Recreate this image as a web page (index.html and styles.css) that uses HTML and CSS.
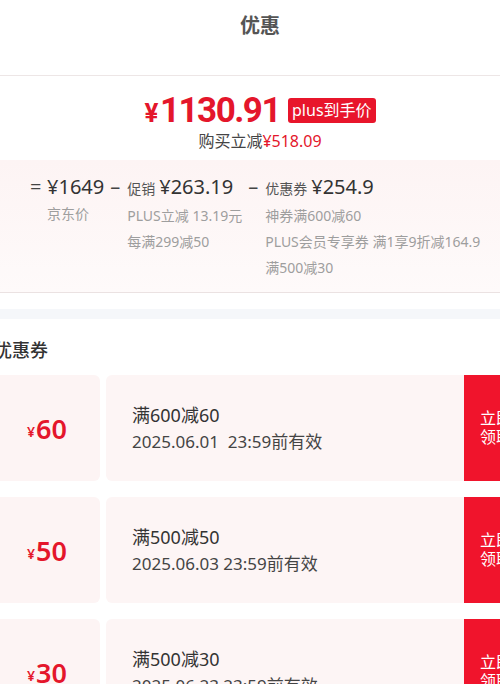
FILE: index.html
```html
<!DOCTYPE html>
<html lang="zh-CN">
<head>
    <meta charset="UTF-8">
    <meta name="viewport" content="width=device-width, initial-scale=1.0">
    <title>优惠</title>
    <link rel="stylesheet" href="styles.css">
</head>
<body>
<div class="page">
    <div class="header">
        <h1>优惠</h1>
    </div>

    <div class="price-box">
        <div class="price-line">
            <span class="price"><span class="yen">¥</span>1130.91</span>
            <span class="badge">plus到手价</span>
        </div>
        <div class="save">购买立减<span class="red">¥518.09</span></div>
    </div>

    <div class="detail">
        <div class="group">
            <span class="sign">=</span>
            <div class="stack">
                <div class="amount">¥1649</div>
                <div class="note">京东价</div>
            </div>
        </div>
        <div class="group">
            <span class="sign">–</span>
            <div class="stack">
                <div class="amount"><small>促销</small>¥263.19</div>
                <div class="note">PLUS立减 13.19元</div>
                <div class="note">每满299减50</div>
            </div>
        </div>
        <div class="group">
            <span class="sign">–</span>
            <div class="stack">
                <div class="amount"><small>优惠券</small>¥254.9</div>
                <div class="note">神券满600减60</div>
                <div class="note">PLUS会员专享券 满1享9折减164.9</div>
                <div class="note">满500减30</div>
            </div>
        </div>
    </div>

    <div class="band"></div>

    <div class="coupons">
        <h2>优惠券</h2>

        <div class="coupon">
            <div class="value"><span class="yen">¥</span>60</div>
            <div class="info">
                <div class="title">满600减60</div>
                <div class="date">2025.06.01&nbsp; 23:59前有效</div>
            </div>
            <div class="get">立即<br>领取</div>
        </div>

        <div class="coupon">
            <div class="value"><span class="yen">¥</span>50</div>
            <div class="info">
                <div class="title">满500减50</div>
                <div class="date">2025.06.03 23:59前有效</div>
            </div>
            <div class="get">立即<br>领取</div>
        </div>

        <div class="coupon">
            <div class="value"><span class="yen">¥</span>30</div>
            <div class="info">
                <div class="title">满500减30</div>
                <div class="date">2025.06.23 23:59前有效</div>
            </div>
            <div class="get">立即<br>领取</div>
        </div>
    </div>
</div>
</body>
</html>
```

FILE: styles.css
```css
html, body {
    overflow: hidden;
}

body {
    margin: 0;
    font-family: "Noto Sans", "Noto Sans CJK SC", sans-serif;
    color: #333333;
    background-color: #FFFFFF;
}

/* La vista está recortada: la página es más ancha que la ventana */
.page {
    width: 532px;
    margin-left: -6px;
}

/* Cabecera */
.header {
    height: 75px;
    border-bottom: 1px solid #EDE6E6;
    text-align: center;
}

h1 {
    margin: 0;
    padding-top: 12px;
    font-size: 20px;
    line-height: 28px;
    font-weight: 700;
    color: #555555;
}

/* Precio final */
.price-box {
    padding: 14px 0 8px;
    text-align: center;
}

.price-line {
    display: flex;
    justify-content: center;
    align-items: center;
    height: 40px;
}

.price {
    font-family: "Roboto", "Noto Sans CJK SC", sans-serif;
    font-size: 35px;
    font-weight: 700;
    color: #E4162B;
    letter-spacing: -1.5px;
}

.price .yen {
    font-size: 26px;
    margin-right: 3px;
}

.badge {
    margin-left: 8px;
    padding: 0 4px;
    height: 25px;
    line-height: 25px;
    font-size: 16px;
    color: #FFFFFF;
    background-color: #E8152B;
    border-radius: 3px;
}

.save {
    font-size: 16px;
    line-height: 22px;
    color: #444444;
}

.red {
    color: #E4162B;
}

/* Desglose */
.detail {
    display: flex;
    gap: 6px;
    padding: 13px 0 11px 36px;
    background: linear-gradient(#FDF4F4, #FEFAFA);
    border-bottom: 1px solid #EBE2E2;
}

.group {
    display: flex;
}

.sign {
    width: 17px;
    font-size: 20px;
    line-height: 28px;
    color: #444444;
}

.amount {
    font-size: 20px;
    line-height: 28px;
    color: #333333;
}

.amount small {
    font-size: 14px;
    margin-right: 4px;
    color: #555555;
}

.note {
    font-size: 14px;
    line-height: 26px;
    color: #9E9E9E;
}

.band {
    height: 10px;
    margin-top: 16px;
    background-color: #F5F7FA;
}

/* Cupones */
h2 {
    margin: 18px 0 12px;
    font-size: 18px;
    line-height: 26px;
    font-weight: 500;
    color: #333333;
}

.coupon {
    display: flex;
    height: 106px;
    margin-bottom: 16px;
}

.value {
    width: 106px;
    display: flex;
    justify-content: center;
    align-items: center;
    background-color: #FDF4F4;
    border-radius: 6px;
    font-size: 27px;
    font-weight: 600;
    color: #E4162B;
}

.value .yen {
    font-size: 14px;
    margin: 6px 1px 0 0;
}

.info {
    flex: 1;
    margin-left: 6px;
    padding-left: 26px;
    display: flex;
    flex-direction: column;
    justify-content: center;
    background-color: #FDF5F5;
    border-radius: 6px 0 0 6px;
}

.title {
    font-size: 18px;
    line-height: 28px;
}

.date {
    font-size: 17px;
    line-height: 26px;
    color: #444444;
}

.get {
    width: 62px;
    box-sizing: border-box;
    padding-left: 16px;
    display: flex;
    align-items: center;
    font-size: 16px;
    line-height: 19px;
    white-space: nowrap;
    color: #FFFFFF;
    background-color: #F0142C;
}
```
